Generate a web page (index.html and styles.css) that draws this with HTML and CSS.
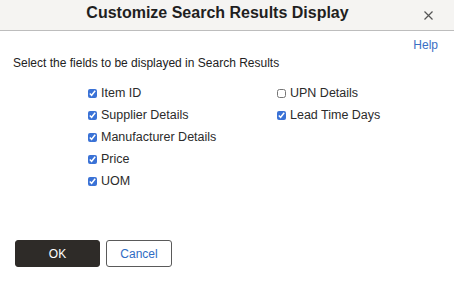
FILE: index.html
```html
<!DOCTYPE html>
<html lang="en">
<head>
<meta charset="utf-8">
<title>Customize Search Results Display</title>
<link rel="stylesheet" href="styles.css">
</head>
<body>
<div class="dialog">
  <div class="header">
    <h1 class="title">Customize Search Results Display</h1>
    <button class="close" aria-label="Close">
      <svg width="9" height="9" viewBox="0 0 9 9"><path d="M0.5 0.5L8.5 8.5M8.5 0.5L0.5 8.5" stroke="#555" stroke-width="1.2" fill="none"/></svg>
    </button>
  </div>
  <div class="body">
    <div class="help-row"><a class="help" href="#">Help</a></div>
    <p class="intro">Select the fields to be displayed in Search Results</p>
    <div class="fields">
      <div class="col">
        <label class="field"><input type="checkbox" checked><span>Item ID</span></label>
        <label class="field"><input type="checkbox" checked><span>Supplier Details</span></label>
        <label class="field"><input type="checkbox" checked><span>Manufacturer Details</span></label>
        <label class="field"><input type="checkbox" checked><span>Price</span></label>
        <label class="field"><input type="checkbox" checked><span>UOM</span></label>
      </div>
      <div class="col">
        <label class="field"><input type="checkbox"><span>UPN Details</span></label>
        <label class="field"><input type="checkbox" checked><span>Lead Time Days</span></label>
      </div>
    </div>
    <div class="actions">
      <button class="btn ok">OK</button>
      <button class="btn cancel">Cancel</button>
    </div>
  </div>
</div>
</body>
</html>
```

FILE: styles.css
```css
html, body {
  margin: 0;
  padding: 0;
  background: #ffffff;
}
body {
  font-family: "Liberation Sans", Arial, sans-serif;
  font-size: 12px;
  color: #333333;
}
.dialog {
  width: 454px;
  height: 282px;
  background: #ffffff;
}
.header {
  position: relative;
  height: 30px;
  background: #f5f4f2;
  border-bottom: 1px solid #bdbdbd;
  padding-right: 19px;
}
.title {
  margin: 0;
  font-size: 16px;
  font-weight: bold;
  line-height: 26px;
  color: #1f1f1f;
  text-align: center;
}
.close {
  position: absolute;
  left: 424px;
  top: 11px;
  width: 9px;
  height: 9px;
  padding: 0;
  border: 0;
  background: transparent;
  display: flex;
}
.body {
  display: flex;
  flex-direction: column;
}
.help-row {
  display: flex;
  justify-content: flex-end;
  padding-right: 16px;
  margin-top: 7px;
  line-height: 14px;
}
.help {
  color: #3a6fc4;
  text-decoration: none;
}
.intro {
  margin: 4px 0 0 13px;
  line-height: 14px;
  color: #222222;
}
.fields {
  display: grid;
  grid-template-columns: 189px 1fr;
  padding-left: 88px;
  margin-top: 12px;
}
.col {
  display: flex;
  flex-direction: column;
}
.field {
  display: flex;
  align-items: center;
  height: 22px;
  gap: 4px;
  font-size: 12.5px;
  color: #2b2b2b;
}
.field input {
  margin: 0;
  width: 9px;
  height: 9px;
  accent-color: #3a72d6;
}
.actions {
  display: flex;
  gap: 6px;
  padding-left: 15px;
  margin-top: 48px;
}
.btn {
  height: 27px;
  border-radius: 3px;
  font-family: "Liberation Sans", Arial, sans-serif;
  font-size: 12px;
  padding: 0;
}
.ok {
  width: 85px;
  background: #2e2b28;
  border: 1px solid #2e2b28;
  color: #ffffff;
}
.cancel {
  width: 66px;
  background: #ffffff;
  border: 1px solid #5a5a5a;
  color: #2f6cc4;
}
```
